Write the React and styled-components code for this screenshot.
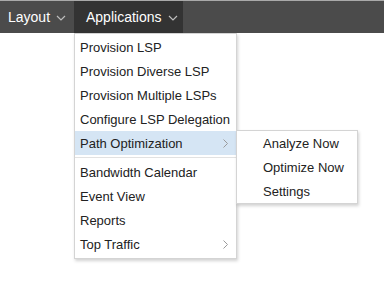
import React from "react";
import styled, { createGlobalStyle } from "styled-components";

const Global = createGlobalStyle`
  html, body { margin: 0; padding: 0; background: #fff; }
  body { font-family: Arial, "Liberation Sans", sans-serif; }
`;

const Page = styled.div`
  display: flex;
  flex-direction: column;
  width: 384px;
  height: 284px;
`;

const Bar = styled.div`
  display: flex;
  flex: none;
  height: 33px;
  background: #4b4b4b;
  border-top: 1px solid #a9a9a9;
  box-sizing: border-box;
`;

const Tab = styled.div`
  display: flex;
  align-items: center;
  gap: 6px;
  padding: 0 0 0 ${(p) => p.$pl}px;
  width: ${(p) => p.$w}px;
  box-sizing: border-box;
  color: #fff;
  font-size: 14px;
  white-space: nowrap;
  background: ${(p) => (p.$active ? "#333333" : "transparent")};
`;

const Caret = styled.svg`
  flex: none;
  width: 10px;
  height: 6px;
  margin-top: 2px;
`;

const Menus = styled.div`
  display: flex;
  align-items: flex-start;
  padding-left: 74px;
`;

const Menu = styled.div`
  width: ${(p) => p.$w}px;
  margin-top: ${(p) => p.$mt || 0}px;
  margin-left: ${(p) => p.$ml || 0}px;
  background: #fff;
  border: 1px solid #d4d4d4;
  box-shadow: 1px 2px 3px rgba(0, 0, 0, 0.18);
  padding: ${(p) => (p.$sub ? "0" : "1px 0 2px")};
  box-sizing: border-box;
  position: relative;
  z-index: ${(p) => (p.$sub ? 2 : 1)};
`;

const Item = styled.div`
  position: relative;
  display: flex;
  align-items: center;
  height: 24px;
  padding-left: ${(p) => p.$pl || 5}px;
  font-size: 13px;
  color: #222;
  background: ${(p) => (p.$hl ? "#d5e5f4" : "transparent")};
  white-space: nowrap;
`;

const Chevron = styled.svg`
  position: absolute;
  right: 8px;
  top: 8px;
  width: 5px;
  height: 9px;
`;

const Sep = styled.div`
  height: 1px;
  background: #e2e2e2;
  margin: 2px 0;
`;

const Down = () => (
  <Caret viewBox="0 0 10 6">
    <path d="M1 1l4 4 4-4" fill="none" stroke="#bdbdbd" strokeWidth="1.2" />
  </Caret>
);

const Right = () => (
  <Chevron viewBox="0 0 5 9">
    <path d="M0.5 0.5l4 4-4 4" fill="none" stroke="#9a9a9a" strokeWidth="1" />
  </Chevron>
);

export default function App() {
  return (
    <>
      <Global />
      <Page>
        <Bar>
          <Tab $pl={8} $w={74}>
            Layout <Down />
          </Tab>
          <Tab $pl={12} $w={109} $active>
            Applications <Down />
          </Tab>
        </Bar>
        <Menus>
          <Menu $w={163}>
            <Item>Provision LSP</Item>
            <Item>Provision Diverse LSP</Item>
            <Item>Provision Multiple LSPs</Item>
            <Item>Configure LSP Delegation</Item>
            <Item $hl>
              Path Optimization
              <Right />
            </Item>
            <Sep />
            <Item>Bandwidth Calendar</Item>
            <Item>Event View</Item>
            <Item>Reports</Item>
            <Item>
              Top Traffic
              <Right />
            </Item>
          </Menu>
          <Menu $w={122} $sub $mt={97} $ml={-1}>
            <Item $pl={26}>Analyze Now</Item>
            <Item $pl={26}>Optimize Now</Item>
            <Item $pl={26}>Settings</Item>
          </Menu>
        </Menus>
      </Page>
    </>
  );
}
